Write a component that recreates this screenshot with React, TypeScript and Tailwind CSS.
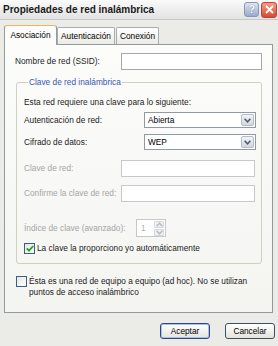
import React from 'react';

const Chevron = ({ color = '#4d5d7a' }: { color?: string }) => (
  <svg width="7" height="5" viewBox="0 0 7 5">
    <path d="M0.6 0.8 L3.5 3.8 L6.4 0.8" fill="none" stroke={color} strokeWidth="1.6" />
  </svg>
);

function Dropdown({ value }: { value: string }) {
  return (
    <div className="flex h-[16px] w-[112px] items-center border border-[#8f9aa6] bg-white">
      <span className="flex-1 pl-[3px] text-black">{value}</span>
      <span className="mr-[1px] flex h-[12px] w-[13px] items-center justify-center rounded-[2px] border border-[#b4bccb] bg-gradient-to-b from-[#f4f4f4] to-[#d4d6db]">
        <Chevron />
      </span>
    </div>
  );
}

function TextBox({ w, h, disabled }: { w: string; h: string; disabled?: boolean }) {
  return (
    <div
      className={`${w} ${h} border bg-white ${disabled ? 'border-[#c6c8cb]' : 'border-[#a3a8ad]'}`}
    />
  );
}

function Check({ checked }: { checked?: boolean }) {
  return (
    <span className="flex h-[11px] w-[11px] shrink-0 items-center justify-center border border-[#3a5f86] bg-gradient-to-br from-[#e6e6e0] to-white">
      {checked && (
        <svg width="8" height="7" viewBox="0 0 8 7">
          <path d="M0.8 3.4 L3 5.6 L7.2 1" fill="none" stroke="#24a024" strokeWidth="1.8" />
        </svg>
      )}
    </span>
  );
}

export default function App() {
  const tabs = ['Asociación', 'Autenticación', 'Conexión'];

  return (
    <div className="flex h-[346px] w-[278px] flex-col overflow-hidden bg-[#ebebe8] font-['Liberation_Sans',Arial,sans-serif] text-[8.3px] leading-none text-[#1b1b1b]">
      {/* title bar */}
      <div className="flex h-[20px] shrink-0 items-center justify-between border-b border-[#c9c9c9] bg-gradient-to-b from-[#fafafa] to-[#e3e3e3] pl-[3px] pr-[1px]">
        <span className="text-[10px] font-bold text-[#1a1a1a]">Propiedades de red inalámbrica</span>
        <div className="flex items-center gap-[2px]">
          <div className="flex h-[15px] w-[15px] items-center justify-center rounded-[3px] border border-[#8797b5] bg-gradient-to-b from-[#dfe5f1] to-[#9aaacb] text-[11px] font-bold text-white [text-shadow:0_0_1px_#4a5a80]">
            ?
          </div>
          <div className="flex h-[16px] w-[16px] items-center justify-center rounded-[3px] border border-[#b6483a] bg-gradient-to-b from-[#f59c85] to-[#d9462e]">
            <svg width="9" height="9" viewBox="0 0 9 9">
              <path d="M1 1 L8 8 M8 1 L1 8" stroke="white" strokeWidth="1.8" />
            </svg>
          </div>
        </div>
      </div>

      {/* tabs */}
      <div className="mt-[5px] flex items-end pl-[4px]">
        {tabs.map((t, i) =>
          i === 0 ? (
            <div
              key={t}
              className="relative z-10 -mb-[1px] flex h-[20px] w-[53px] items-center justify-center rounded-t-[3px] border border-b-0 border-[#919b9c] border-t-[#e6b862] bg-[#fcfcfb] text-black"
            >
              {t}
            </div>
          ) : (
            <div
              key={t}
              className={`flex h-[17px] items-center justify-center rounded-t-[2px] border border-b-0 border-[#a7aeb0] bg-gradient-to-b from-white to-[#ecebe6] text-black ${i === 1 ? 'w-[58px]' : 'w-[43px]'} ${i === 2 ? 'ml-[1px]' : ''}`}
            >
              {t}
            </div>
          )
        )}
      </div>

      {/* panel */}
      <div className="ml-[4px] flex h-[269px] w-[269px] flex-col border border-[#919b9c] bg-gradient-to-b from-[#fcfcfb] to-[#f4f4f1] pl-[10px]">
        <div className="mt-[8px] flex items-center">
          <span className="w-[106px]">Nombre de red (SSID):</span>
          <TextBox w="w-[141px]" h="h-[17px]" />
        </div>

        <fieldset className="ml-[1px] mt-[7px] w-[246px] rounded-[3px] border border-[#d0d0bf] pb-[9px] pl-[7px]">
          <legend className="ml-[4px] px-[1px] text-[8.3px] leading-[10px] text-[#3558b0]">Clave de red inalámbrica</legend>

          <div className="mt-[9px] flex h-[12px] items-center">Esta red requiere una clave para lo siguiente:</div>

          <div className="mt-[4px] flex items-center">
            <span className="w-[120px]">Autenticación de red:</span>
            <Dropdown value="Abierta" />
          </div>

          <div className="mt-[6px] flex items-center">
            <span className="w-[120px]">Cifrado de datos:</span>
            <Dropdown value="WEP" />
          </div>

          <div className="mt-[10px] flex items-center text-[#a6a6a6]">
            <span className="w-[97px]">Clave de red:</span>
            <TextBox w="w-[134px]" h="h-[17px]" disabled />
          </div>

          <div className="mt-[8px] flex items-center text-[#a6a6a6]">
            <span className="w-[97px]">Confirme la clave de red:</span>
            <TextBox w="w-[134px]" h="h-[17px]" disabled />
          </div>

          <div className="mt-[17px] flex items-center text-[#a6a6a6]">
            <span className="w-[112px]">Índice de clave (avanzado):</span>
            <div className="flex h-[18px] w-[30px] items-center border border-[#c6c8cb] bg-white">
              <span className="flex-1 pl-[4px] text-[#b0b0b0]">1</span>
              <div className="mr-[1px] flex h-[14px] w-[10px] flex-col gap-[1px]">
                <span className="flex flex-1 items-center justify-center rounded-[1px] border border-[#d6d8dc] bg-[#f1f1f1]">
                  <span className="rotate-180"><Chevron color="#b8bcc4" /></span>
                </span>
                <span className="flex flex-1 items-center justify-center rounded-[1px] border border-[#d6d8dc] bg-[#f1f1f1]">
                  <Chevron color="#b8bcc4" />
                </span>
              </div>
            </div>
          </div>

          <div className="mt-[5px] flex h-[12px] items-center gap-[2px]">
            <Check checked />
            <span>La clave la proporciono yo automáticamente</span>
          </div>
        </fieldset>

        <div className="ml-[1px] mt-[12px] flex items-start gap-[2px]">
          <Check />
          <span className="leading-[10.5px]">
            Ésta es una red de equipo a equipo (ad hoc). No se utilizan
            <br />
            puntos de acceso inalámbrico
          </span>
        </div>
      </div>

      {/* buttons */}
      <div className="mt-[10px] flex justify-end gap-[15px] pr-[3px]">
        <button className="h-[16px] w-[50px] rounded-[3px] border border-[#2c4a80] bg-gradient-to-b from-white to-[#e4e4dc] text-[8.3px] text-black shadow-[inset_0_0_0_1px_#a9c1ea]">
          Aceptar
        </button>
        <button className="h-[16px] w-[50px] rounded-[3px] border border-[#3f4d66] bg-gradient-to-b from-white to-[#e4e4dc] text-[8.3px] text-black">
          Cancelar
        </button>
      </div>
    </div>
  );
}
